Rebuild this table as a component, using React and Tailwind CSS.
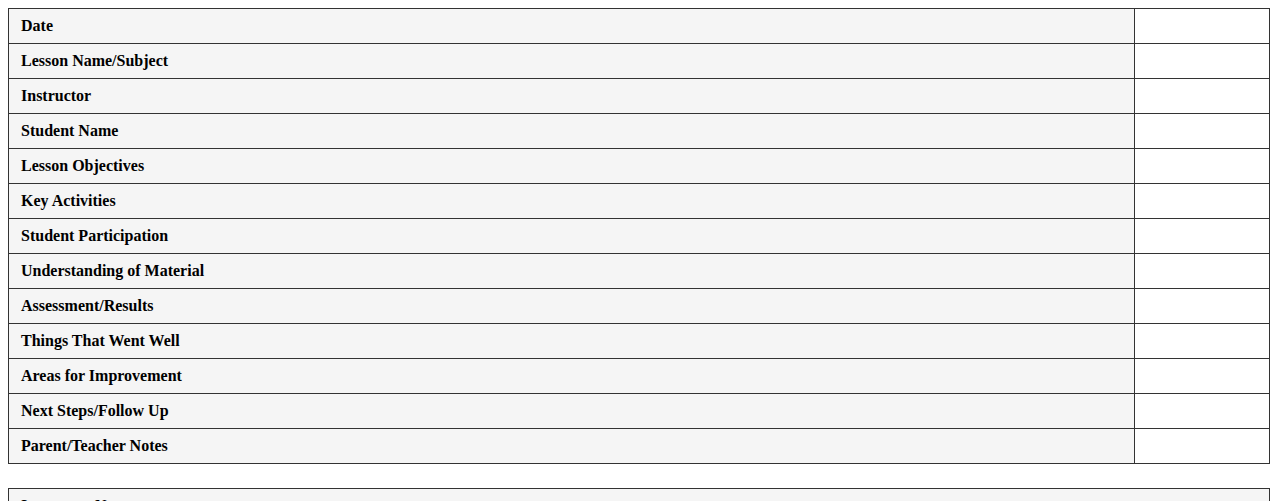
export default function App() {
  const rows = [
    "Date",
    "Lesson Name/Subject",
    "Instructor",
    "Student Name",
    "Lesson Objectives",
    "Key Activities",
    "Student Participation",
    "Understanding of Material",
    "Assessment/Results",
    "Things That Went Well",
    "Areas for Improvement",
    "Next Steps/Follow Up",
    "Parent/Teacher Notes",
  ];
  return (
    <div className="p-2 bg-white text-black" style={{ fontFamily: '"Liberation Serif", "Times New Roman", serif' }}>
      <table className="w-full border-collapse table-fixed border border-[#333]">
        <colgroup>
          <col className="w-[1126px]" />
          <col />
        </colgroup>
        <tbody>
          {rows.map((r) => (
            <tr key={r}>
              <td className="border border-[#333] bg-[#f5f5f5] px-3 py-2 text-base font-bold leading-[18px]">{r}</td>
              <td className="border border-[#333] bg-white px-3 py-2 leading-[18px]"></td>
            </tr>
          ))}
        </tbody>
      </table>
      <table className="mt-6 w-full border-collapse table-fixed border border-[#333]">
        <tbody>
          <tr>
            <td className="border border-[#333] bg-[#f5f5f5] px-3 py-2 text-base font-bold leading-[18px]">Instructor Notes</td>
          </tr>
          <tr>
            <td className="border border-[#333] bg-white px-3 py-2 h-[80px]"></td>
          </tr>
        </tbody>
      </table>
    </div>
  );
}
